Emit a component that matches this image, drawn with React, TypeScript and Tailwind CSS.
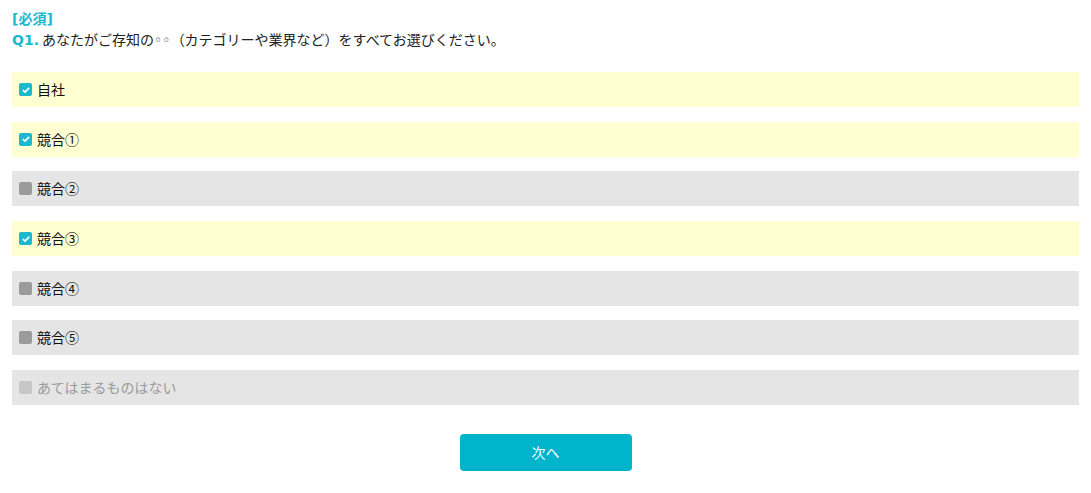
import { useState } from "react";

const OPTIONS = [
  { label: "自社", checked: true },
  { label: "競合①", checked: true },
  { label: "競合②", checked: false },
  { label: "競合③", checked: true },
  { label: "競合④", checked: false },
  { label: "競合⑤", checked: false },
  { label: "あてはまるものはない", checked: false, disabled: true },
];

function Box({ checked, disabled }: { checked: boolean; disabled?: boolean }) {
  if (checked) {
    return (
      <span className="flex h-[13px] w-[13px] items-center justify-center rounded-[2px] bg-[#1ab9cf]">
        <svg viewBox="0 0 12 12" className="h-[10px] w-[10px]">
          <path d="M2.2 6.2 4.8 8.6 9.8 3.4" fill="none" stroke="#fff" strokeWidth="2" />
        </svg>
      </span>
    );
  }
  return (
    <span
      className={
        disabled
          ? "block h-[13px] w-[13px] rounded-[2px] bg-[#c6c6c6]"
          : "block h-[13px] w-[13px] rounded-[2px] bg-[#9b9b9b]"
      }
    />
  );
}

export default function App() {
  const [items, setItems] = useState(OPTIONS);

  function toggle(i: number) {
    setItems((prev) =>
      prev.map((it, idx) => (idx === i && !it.disabled ? { ...it, checked: !it.checked } : it)),
    );
  }

  return (
    <div
      className="min-h-screen bg-white px-3 pt-[8px] text-[14px] text-[#222]"
      style={{ fontFamily: '"Noto Sans CJK JP", "Liberation Sans", sans-serif' }}
    >
      <p className="h-[20px] text-[14px] font-bold leading-[20px] text-[#1ab9cf]">
        <span style={{ fontFamily: '"DejaVu Sans", sans-serif' }}>[</span>必須
        <span style={{ fontFamily: '"DejaVu Sans", sans-serif' }}>]</span>
      </p>
      <p className="h-[22px] leading-[22px]">
        <span className="font-bold text-[#1ab9cf]" style={{ fontFamily: '"DejaVu Sans", sans-serif' }}>
          Q1.
        </span>{" "}
        あなたがご存知の
        <span className="text-[14px] leading-none" style={{ fontFamily: '"DejaVu Sans", sans-serif' }}>
          ◦◦
        </span>
        （カテゴリーや業界など）をすべてお選びください。
      </p>

      <div className="mt-[22px] flex flex-col gap-[14.7px]">
        {items.map((it, i) => (
          <button
            key={it.label}
            type="button"
            onClick={() => toggle(i)}
            className={
              it.checked
                ? "flex h-[35px] items-center gap-[5px] bg-[#ffffd1] px-[7px] text-left"
                : "flex h-[35px] items-center gap-[5px] bg-[#e5e5e5] px-[7px] text-left"
            }
          >
            <Box checked={it.checked} disabled={it.disabled} />
            <span className={it.disabled ? "text-[#9a9a9a]" : "text-[#111]"}>{it.label}</span>
          </button>
        ))}
      </div>

      <div className="mt-[29px] flex justify-center">
        <button
          type="button"
          className="h-[37px] w-[172px] rounded-[4px] bg-[#00b4cc] text-[14px] text-white"
        >
          次へ
        </button>
      </div>
    </div>
  );
}
